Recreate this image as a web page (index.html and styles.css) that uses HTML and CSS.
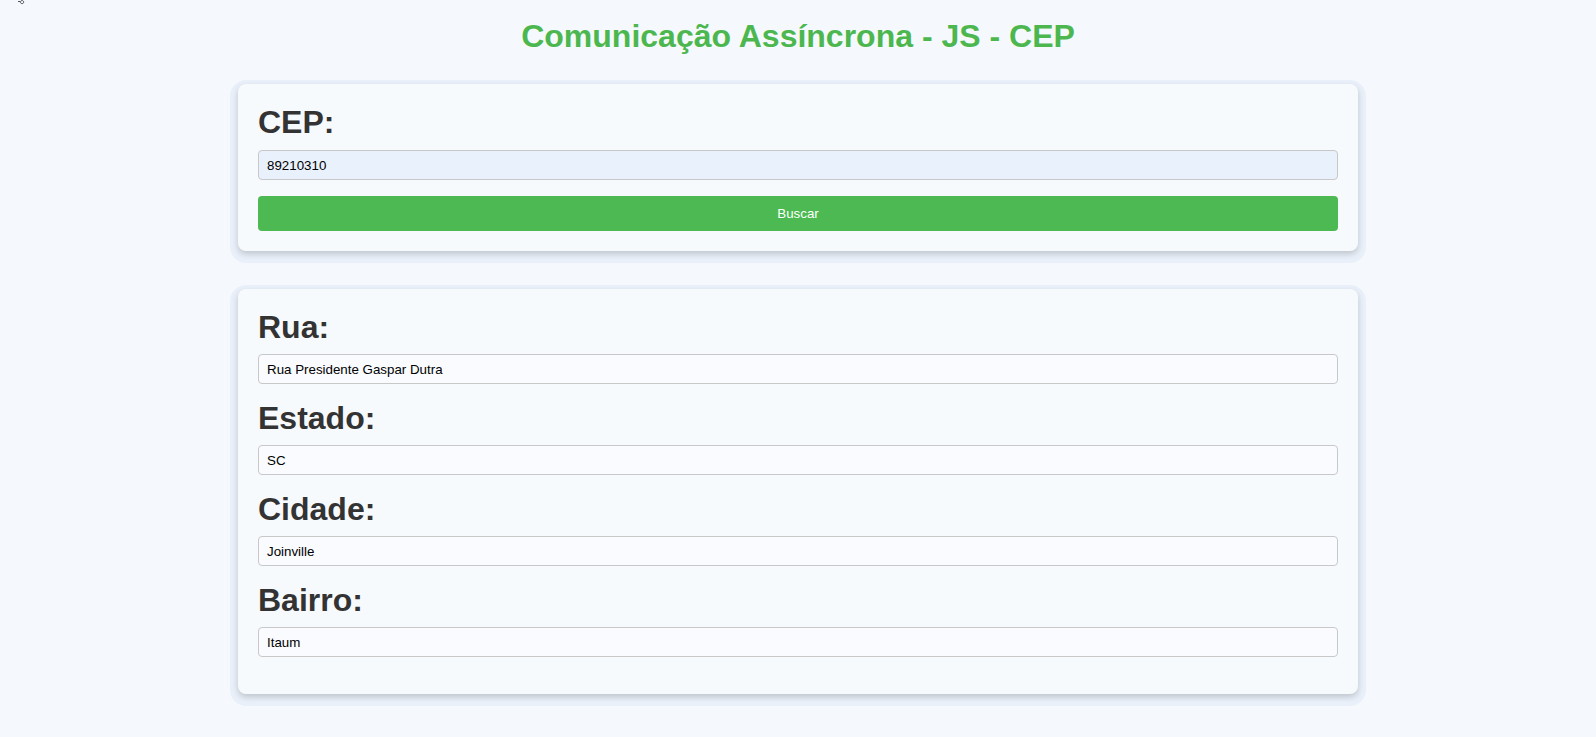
FILE: index.html
```html
<!DOCTYPE html>
<html lang="pt-BR">
<head>
<meta charset="utf-8">
<title>Comunicação Assíncrona - JS - CEP</title>
<link rel="stylesheet" href="styles.css">
</head>
<body>
<svg class="corner-mark" width="10" height="5" viewBox="0 0 10 5"><path d="M1 1 Q2 3 3 1 M5 0.5 a1.6 1.6 0 1 0 0.1 0" fill="none" stroke="#555" stroke-width="1"/></svg>
<h1 class="title">Comunicação Assíncrona - JS - CEP</h1>
<main class="page">
  <section class="card">
    <label class="field-label" for="cep">CEP:</label>
    <input class="field autofill" id="cep" type="text" value="89210310">
    <button class="btn" type="button">Buscar</button>
  </section>
  <section class="card">
    <label class="field-label" for="rua">Rua:</label>
    <input class="field" id="rua" type="text" value="Rua Presidente Gaspar Dutra">
    <label class="field-label" for="estado">Estado:</label>
    <input class="field" id="estado" type="text" value="SC">
    <label class="field-label" for="cidade">Cidade:</label>
    <input class="field" id="cidade" type="text" value="Joinville">
    <label class="field-label" for="bairro">Bairro:</label>
    <input class="field last" id="bairro" type="text" value="Itaum">
  </section>
</main>
</body>
</html>
```

FILE: styles.css
```css
* { box-sizing: border-box; }
html, body {
  margin: 0;
  padding: 0;
  background: #f5f9fd;
  font-family: "Liberation Sans", Arial, sans-serif;
}
body {
  position: relative;
  min-height: 737px;
}
.corner-mark {
  position: absolute;
  left: 17px;
  top: 0;
}
.title {
  margin: 18px 0 0;
  text-align: center;
  color: #4cb74f;
  font-size: 32px;
  font-weight: bold;
  line-height: 37px;
}
.page {
  display: flex;
  flex-direction: column;
  align-items: center;
  gap: 38px;
  padding-top: 29px;
  padding-bottom: 40px;
}
.card {
  width: 1120px;
  display: flex;
  flex-direction: column;
  padding: 20px;
  background: #f7fafd;
  border-radius: 8px;
  box-shadow: 0 3px 6px rgba(0, 0, 0, 0.18), 0 4px 0 8px #e9f0f9;
}
.field-label {
  display: block;
  font-size: 32px;
  font-weight: bold;
  line-height: 37px;
  color: #333;
  margin-bottom: 8px;
}
.field {
  display: block;
  width: 100%;
  height: 30px;
  padding: 6px 8px;
  font-family: "Liberation Sans", Arial, sans-serif;
  font-size: 13.33px;
  color: #000;
  background: #f9fbfe;
  border: 1px solid #c8c8c8;
  border-radius: 4px;
  margin-bottom: 16px;
}
.field.autofill {
  background: #e9f1fc;
  margin-top: 1px;
  margin-bottom: 16px;
}
.field.last { margin-bottom: 17px; }
.btn {
  display: block;
  width: 100%;
  height: 35px;
  border: none;
  border-radius: 4px;
  background: #4cb952;
  color: #fff;
  font-family: "Liberation Sans", Arial, sans-serif;
  font-size: 13.33px;
  cursor: pointer;
}
```
